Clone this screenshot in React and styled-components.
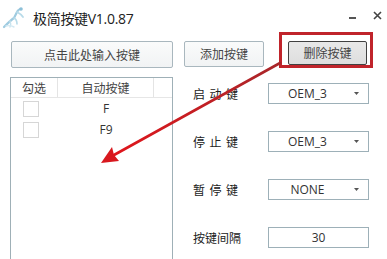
import React from "react";
import styled, { createGlobalStyle } from "styled-components";

const Global = createGlobalStyle`
  html, body { margin: 0; padding: 0; background: #fff; }
  body { font-family: "Open Sans", "Noto Sans CJK SC", sans-serif; }
`;

const Window = styled.div`
  position: relative;
  width: 387px;
  height: 259px;
  overflow: hidden;
  background: #fff;
  color: #333;
  font-family: "Open Sans", "Noto Sans CJK SC", sans-serif;
`;

const TitleBar = styled.div`
  height: 33px;
  display: flex;
  align-items: center;
  padding-left: 2px;
`;

const Title = styled.div`
  margin-left: 7px;
  margin-top: 2px;
  font-size: 14px;
  color: #222;
  letter-spacing: -0.3px;
`;

const WinControls = styled.div`
  margin-left: auto;
  display: flex;
  align-items: center;
  gap: 17px;
  padding-right: 5px;
  margin-top: -2px;
`;

const Minimize = styled.div`
  width: 7px;
  height: 2px;
  background: #555;
  margin-top: 5px;
`;

const Main = styled.div`
  display: flex;
  padding: 8px 0 0 11px;
`;

const LeftCol = styled.div`
  width: 162px;
  display: flex;
  flex-direction: column;
  gap: 9px;
`;

const FlatButton = styled.div`
  box-sizing: border-box;
  height: ${(p) => p.$h || 27}px;
  width: ${(p) => (p.$w ? p.$w + "px" : "auto")};
  display: flex;
  align-items: center;
  justify-content: center;
  border: 1px solid ${(p) => (p.$dark ? "#404040" : "#a9b7be")};
  border-radius: 2px;
  background: ${(p) => (p.$dark ? "linear-gradient(#e8e8e8, #dedede)" : "linear-gradient(#fafbfb, #f1f3f4)")};
  font-size: 12px;
  color: #444;
`;

const ListBox = styled.div`
  box-sizing: border-box;
  height: 200px;
  border: 1px solid #9fb0b7;
  border-bottom: none;
  margin-left: -1px;
`;

const ListHeader = styled.div`
  display: grid;
  grid-template-columns: 47px 96px 1fr;
  height: 19px;
  border-bottom: 1px solid #e6e6e6;
`;

const HeaderCell = styled.div`
  display: flex;
  align-items: center;
  justify-content: center;
  font-size: 12px;
  color: #444;
  border-right: ${(p) => (p.$last ? "none" : "1px solid #e4e4e4")};
`;

const ListRow = styled.div`
  display: grid;
  grid-template-columns: 47px 96px 1fr;
  height: 21px;
  align-items: center;
`;

const CheckBox = styled.div`
  box-sizing: border-box;
  width: 16px;
  height: 16px;
  border: 1px solid #d6d6d6;
  margin-left: 12px;
`;

const RowText = styled.div`
  text-align: center;
  font-size: 12px;
  color: #333;
`;

const RightCol = styled.div`
  margin-left: 11px;
  width: 190px;
`;

const ButtonRow = styled.div`
  display: flex;
  align-items: flex-start;
  gap: 24px;
`;

const Form = styled.div`
  margin-top: 16px;
  display: grid;
  grid-template-columns: 75px 101px;
  grid-auto-rows: 21px;
  row-gap: 27px;
  padding-left: 9px;
  align-items: center;
`;

const Label = styled.div`
  font-size: 12px;
  color: #222;
  letter-spacing: ${(p) => (p.$spaced ? "4.5px" : "0")};
  white-space: nowrap;
`;

const Select = styled.div`
  box-sizing: border-box;
  height: 21px;
  border: 1px solid #9db0b8;
  display: flex;
  align-items: center;
  font-size: 12px;
  color: #333;
  background: #fff;
`;

const SelectText = styled.div`
  flex: 1;
  text-align: center;
  padding-left: 2px;
`;

const Caret = styled.div`
  width: 24px;
  display: flex;
  justify-content: center;
  align-items: center;
`;

const Input = styled(Select)`
  justify-content: center;
`;

const RedFrame = styled.div`
  position: absolute;
  left: 279px;
  top: 32px;
  width: 94px;
  height: 36px;
  box-sizing: border-box;
  border: 3px solid #c0242b;
  pointer-events: none;
`;

const Overlay = styled.svg`
  position: absolute;
  left: 0;
  top: 0;
  pointer-events: none;
`;

function Logo() {
  return (
    <svg width="24" height="24" viewBox="0 0 24 24">
      <path d="M2 22 C6 18 9 15 12 13 C13 11 14 9 15 7 C16 5 17 4 19 4" stroke="#9fcbe0" strokeWidth="2.2" fill="none" strokeLinecap="round" />
      <path d="M15 7 C17 8 19 9 21 12" stroke="#b8dbe9" strokeWidth="1.8" fill="none" strokeLinecap="round" />
      <path d="M12 13 C14 14 15 16 15 19" stroke="#b8dbe9" strokeWidth="1.6" fill="none" strokeLinecap="round" />
      <path d="M8 16 C9 18 9 20 8 22" stroke="#c8e3ee" strokeWidth="1.4" fill="none" strokeLinecap="round" />
      <path d="M4 21 C7 20 10 21 12 22" stroke="#d3e9f2" strokeWidth="1.4" fill="none" strokeLinecap="round" />
      <circle cx="19" cy="4" r="1.8" fill="#8cc0d8" />
    </svg>
  );
}

function CaretIcon() {
  return (
    <svg width="5" height="3" viewBox="0 0 5 3">
      <polygon points="0,0 5,0 2.5,3" fill="#555" />
    </svg>
  );
}

export default function App() {
  const rows = ["F", "F9"];
  const selects = [
    ["启动键", "OEM_3"],
    ["停止键", "OEM_3"],
    ["暂停键", "NONE"],
  ];
  return (
    <Window>
      <Global />
      <TitleBar>
        <Logo />
        <Title>极简按键V1.0.87</Title>
        <WinControls>
          <Minimize />
          <svg width="9" height="9" viewBox="0 0 9 9">
            <path d="M1 1 L8 8 M8 1 L1 8" stroke="#444" strokeWidth="1.6" />
          </svg>
        </WinControls>
      </TitleBar>
      <Main>
        <LeftCol>
          <FlatButton>点击此处输入按键</FlatButton>
          <ListBox>
            <ListHeader>
              <HeaderCell>勾选</HeaderCell>
              <HeaderCell>自动按键</HeaderCell>
              <HeaderCell $last />
            </ListHeader>
            {rows.map((r) => (
              <ListRow key={r}>
                <CheckBox />
                <RowText>{r}</RowText>
                <div />
              </ListRow>
            ))}
          </ListBox>
        </LeftCol>
        <RightCol>
          <ButtonRow>
            <FlatButton $w={80} $h={26}>添加按键</FlatButton>
            <FlatButton $w={79} $h={24} $dark>删除按键</FlatButton>
          </ButtonRow>
          <Form>
            {selects.map(([label, value]) => (
              <React.Fragment key={label}>
                <Label $spaced>{label}</Label>
                <Select>
                  <SelectText>{value}</SelectText>
                  <Caret>
                    <CaretIcon />
                  </Caret>
                </Select>
              </React.Fragment>
            ))}
            <Label>按键间隔</Label>
            <Input>30</Input>
          </Form>
        </RightCol>
      </Main>
      <RedFrame />
      <Overlay width="387" height="259" viewBox="0 0 387 259">
        <defs>
          <linearGradient id="ag" x1="0" y1="0" x2="1" y2="0">
            <stop offset="0" stopColor="#e0161c" />
            <stop offset="1" stopColor="#a8262a" />
          </linearGradient>
        </defs>
        <line x1="280" y1="63" x2="114" y2="155" stroke="url(#ag)" strokeWidth="2.6" strokeLinecap="round" />
        <polygon points="101,163 119,161 114,155 112,147" fill="#d8181e" />
      </Overlay>
    </Window>
  );
}
